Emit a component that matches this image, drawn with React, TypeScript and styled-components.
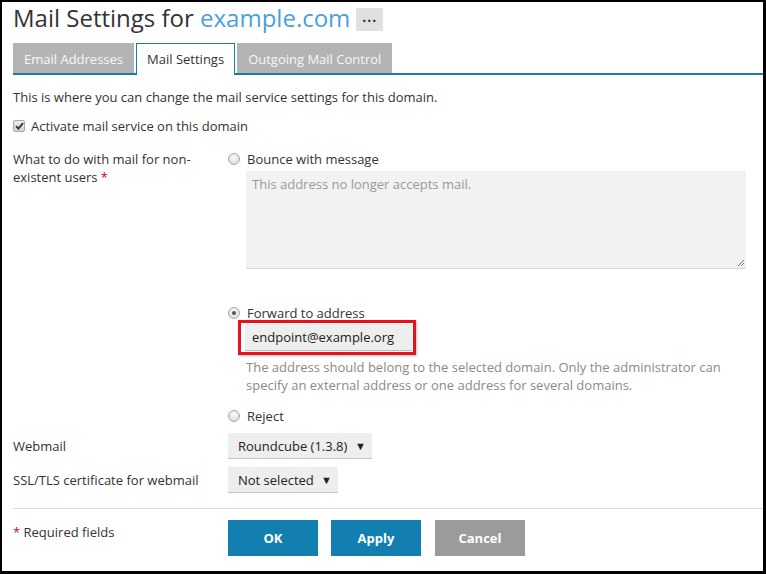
import styled, { createGlobalStyle } from "styled-components";

const Global = createGlobalStyle`
  html, body {
    margin: 0;
    padding: 0;
    background: #fff;
  }
  body {
    font-family: "Open Sans", "Liberation Sans", sans-serif;
    font-size: 13px;
    line-height: 18px;
    color: #333;
  }
  * { box-sizing: border-box; }
`

const Frame = styled.div`
  width: 766px;
  height: 574px;
  border-style: solid;
  border-color: #000;
  border-width: 2px 3px 3px 2px;
  padding-left: 11px;
  overflow: hidden;
`

const TitleRow = styled.div`
  display: flex;
  align-items: center;
  gap: 6px;
  margin-top: 1px;
  height: 30px;
`

const Title = styled.h1`
  margin: 0;
  font-size: 24px;
  font-weight: 400;
  line-height: 30px;
  color: #333;
  span { color: #4a9fe0; }
`

const MoreButton = styled.div`
  width: 27px;
  height: 23px;
  background: #e0e0e0;
  display: flex;
  align-items: center;
  justify-content: center;
  font-size: 14px;
  font-weight: 700;
  letter-spacing: 1px;
  color: #333;
  line-height: 1;
  padding-bottom: 4px;
  margin-top: 2px;
`

const TabBar = styled.div`
  display: flex;
  gap: 2px;
  margin-top: 10px;
  height: 32px;
  border-bottom: 2px solid #1a7da6;
`

const Tab = styled.div<{ $active?: boolean }>`
  height: ${p => (p.$active ? "32px" : "30px")};
  padding: 0 ${p => (p.$active ? "10px" : "11px")};
  display: flex;
  align-items: center;
  padding-top: 1px;
  padding-bottom: ${p => (p.$active ? "2px" : "0")};
  background: ${p => (p.$active ? "#fff" : "#b4b4b4")};
  color: ${p => (p.$active ? "#333" : "#f7f7f7")};
  border: ${p => (p.$active ? "1px solid #1a7da6" : "none")};
  border-bottom: none;
  margin-bottom: ${p => (p.$active ? "-2px" : "0")};
`

const Intro = styled.p`
  margin: 13px 0 0;
`

const CheckRow = styled.label`
  display: flex;
  align-items: center;
  gap: 6px;
  margin-top: 11px;
`

const CheckBox = styled.span`
  width: 12px;
  height: 12px;
  border: 1px solid #a8a8a8;
  border-radius: 2px;
  background: linear-gradient(#ececec, #d2d2d2);
  display: flex;
  align-items: center;
  justify-content: center;
`

const FormRow = styled.div<{ $top: number }>`
  display: grid;
  grid-template-columns: 215px 1fr;
  margin-top: ${p => p.$top}px;
  align-items: start;
`

const Label = styled.div`
  padding-right: 20px;
`

const Req = styled.span`
  color: #d0021b;
`

const Options = styled.div`
  display: flex;
  flex-direction: column;
`

const Choice = styled.label<{ $top?: number }>`
  display: flex;
  align-items: center;
  gap: 7px;
  margin-top: ${p => p.$top ?? 0}px;
`

const Radio = styled.span<{ $checked?: boolean }>`
  width: 12px;
  height: 12px;
  border-radius: 50%;
  border: 1px solid #a9a9a9;
  background: radial-gradient(circle at 50% 35%, #fafafa, #d4d4d4);
  display: flex;
  align-items: center;
  justify-content: center;
  &::after {
    content: "";
    width: 4px;
    height: 4px;
    border-radius: 50%;
    background: ${p => (p.$checked ? "#555" : "transparent")};
  }
`

const Indented = styled.div<{ $top?: number }>`
  padding-left: 18px;
  margin-top: ${p => p.$top ?? 0}px;
`

const MessageArea = styled.div`
  width: 500px;
  height: 98px;
  background: #f2f2f2;
  border-bottom: 1px solid #d6d6d6;
  color: #9a9a9a;
  padding: 4px 6px;
  position: relative;
`

const Grip = styled.svg`
  position: absolute;
  right: 1px;
  bottom: 1px;
`

const Highlight = styled.div`
  display: inline-block;
  border: 3px solid #e8111b;
  padding: 1px 1px 1px 4px;
  margin-left: -8px;
  margin-top: -2px;
  box-shadow: 1px 1px 2px rgba(0, 0, 0, 0.25);
`

const TextInput = styled.div`
  width: 167px;
  height: 27px;
  background: #eeeeee;
  border-bottom: 1px solid #bdbdbd;
  padding: 0 7px;
  display: flex;
  align-items: center;
  color: #222;
`

const Hint = styled.div`
  margin-top: 3px;
  color: #8a8a8a;
  width: 490px;
`

const Select = styled.div<{ $w: number }>`
  width: ${p => p.$w}px;
  height: 26px;
  background: #eeeeee;
  border-bottom: 1px solid #c4c4c4;
  display: flex;
  align-items: center;
  justify-content: space-between;
  padding: 0 6px 0 10px;
  color: #222;
`

const Caret = styled.span`
  font-size: 11px;
  color: #222;
`

const SelectRow = styled.div<{ $top: number }>`
  display: grid;
  grid-template-columns: 215px 1fr;
  align-items: center;
  margin-top: ${p => p.$top}px;
`

const Divider = styled.div`
  height: 1px;
  background: #dcdcdc;
  margin-top: 15px;
`

const Footer = styled.div`
  display: grid;
  grid-template-columns: 215px 1fr;
  margin-top: 11px;
`

const Required = styled.div`
  padding-top: 3px;
`

const Buttons = styled.div`
  display: flex;
  gap: 13px;
`

const Button = styled.button<{ $muted?: boolean }>`
  width: 90px;
  height: 36px;
  border: none;
  background: ${p => (p.$muted ? "#9b9b9b" : "#137fb0")};
  color: #fff;
  font-family: "Open Sans", "Liberation Sans", sans-serif;
  font-size: 13px;
  font-weight: 700;
  padding: 0;
  &:nth-child(3) { margin-left: 1px; }
`

export default function App() {
  return (
    <>
      <Global />
      <Frame>
        <TitleRow>
          <Title>
            Mail Settings for <span>example.com</span>
          </Title>
          <MoreButton>...</MoreButton>
        </TitleRow>

        <TabBar>
          <Tab>Email Addresses</Tab>
          <Tab $active>Mail Settings</Tab>
          <Tab>Outgoing Mail Control</Tab>
        </TabBar>

        <Intro>This is where you can change the mail service settings for this domain.</Intro>

        <CheckRow>
          <CheckBox>
            <svg width="9" height="8" viewBox="0 0 9 8">
              <path d="M1 4.2 L3.4 6.6 L8 1.2" fill="none" stroke="#333" strokeWidth="1.8" />
            </svg>
          </CheckBox>
          Activate mail service on this domain
        </CheckRow>

        <FormRow $top={15}>
          <Label>
            What to do with mail for non-existent users <Req>*</Req>
          </Label>
          <Options>
            <Choice>
              <Radio />
              Bounce with message
            </Choice>
            <Indented $top={3}>
              <MessageArea>
                This address no longer accepts mail.
                <Grip width="9" height="9" viewBox="0 0 9 9">
                  <path d="M8 2 L2 8 M8 5 L5 8" stroke="#777" strokeWidth="1" />
                </Grip>
              </MessageArea>
            </Indented>
            <Choice $top={35}>
              <Radio $checked />
              Forward to address
            </Choice>
            <Indented>
              <Highlight>
                <TextInput>endpoint@example.org</TextInput>
              </Highlight>
              <Hint>
                The address should belong to the selected domain. Only the administrator can specify an external
                address or one address for several domains.
              </Hint>
            </Indented>
            <Choice $top={13}>
              <Radio />
              Reject
            </Choice>
          </Options>
        </FormRow>

        <SelectRow $top={8}>
          <Label>Webmail</Label>
          <Select $w={144}>
            Roundcube (1.3.8) <Caret>▼</Caret>
          </Select>
        </SelectRow>
        <SelectRow $top={8}>
          <Label>SSL/TLS certificate for webmail</Label>
          <Select $w={110}>
            Not selected <Caret>▼</Caret>
          </Select>
        </SelectRow>

        <Divider />

        <Footer>
          <Required>
            <Req>*</Req> Required fields
          </Required>
          <Buttons>
            <Button>OK</Button>
            <Button>Apply</Button>
            <Button $muted>Cancel</Button>
          </Buttons>
        </Footer>
      </Frame>
    </>
  );
}
